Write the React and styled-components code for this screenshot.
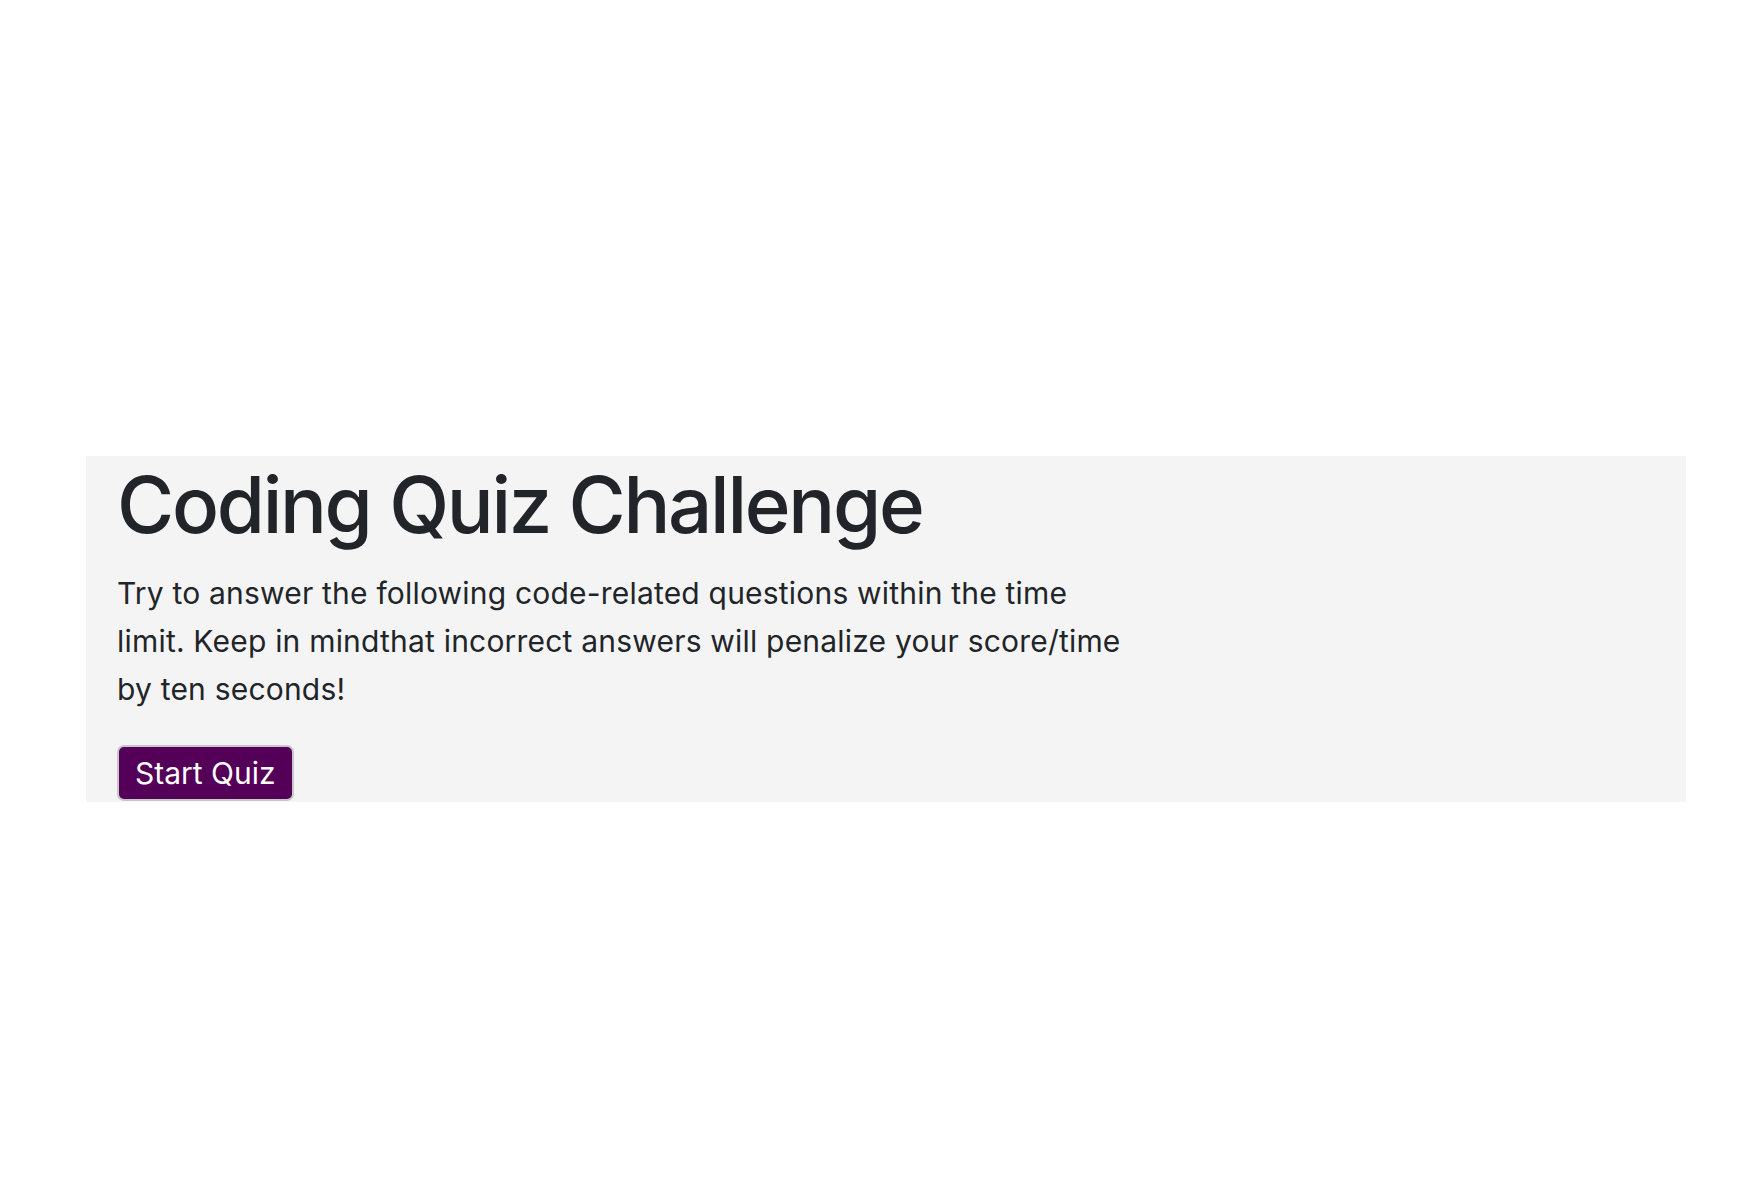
import styled, { createGlobalStyle } from "styled-components";

const GlobalStyle = createGlobalStyle`
  html, body {
    margin: 0;
    padding: 0;
    background: #ffffff;
  }
  body {
    font-family: Inter, "Noto Sans", "Liberation Sans", sans-serif;
    color: #212529;
  }
`;

// outer page; the jumbotron sits a bit below the middle
const Page = styled.main`
  min-height: 1186px;
  box-sizing: border-box;
  padding: 456px 78px 0 86px;
`;

const Jumbotron = styled.section`
  box-sizing: border-box;
  background: #f4f4f4;
  padding: 0 32px 1px 31px;
`;

const Title = styled.h1`
  margin: 0;
  font-size: 78px;
  font-weight: 500;
  line-height: 97px;
  letter-spacing: -2.3px;
  color: #212529;
`;

const Lead = styled.p`
  margin: 16px 0 32px;
  max-width: 1014px;
  font-size: 30px;
  line-height: 48px;
  font-weight: 400;
  letter-spacing: 0.2px;
  color: #212529;
`;

const StartButton = styled.button`
  display: inline-flex;
  align-items: center;
  height: 56px;
  padding: 0 16px;
  box-sizing: border-box;
  background: #540058;
  color: #ffffff;
  border: 2px solid #cbc6cb;
  border-radius: 7px;
  font-family: inherit;
  font-size: 30px;
  font-weight: 400;
  cursor: pointer;
`;

export default function App() {
  return (
    <>
      <GlobalStyle />
      <Page>
        <Jumbotron>
          <Title>Coding Quiz Challenge</Title>
          <Lead>
            Try to answer the following code-related questions within the time
            limit. Keep in mindthat incorrect answers will penalize your
            score/time by ten seconds!
          </Lead>
          <StartButton>Start Quiz</StartButton>
        </Jumbotron>
      </Page>
    </>
  );
}
